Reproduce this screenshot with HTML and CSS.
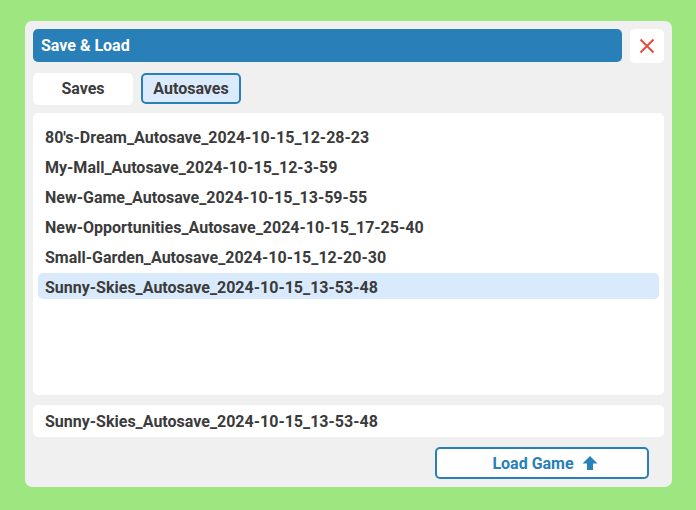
FILE: index.html
```html
<!DOCTYPE html>
<html>
<head>
    <title>Save &amp; Load</title>
    <link rel="stylesheet" href="styles.css">
</head>
<body>
    <div class="panel">
        <div class="header">
            <div class="title">Save &amp; Load</div>
            <button class="close">
                <svg width="16" height="16" viewBox="0 0 16 16">
                    <path d="M1.5 1.5 L14.5 14.5 M14.5 1.5 L1.5 14.5" stroke="#e74c3c" stroke-width="2" fill="none"/>
                </svg>
            </button>
        </div>
        <div class="tabs">
            <div class="tab">Saves</div>
            <div class="tab active">Autosaves</div>
        </div>
        <ul class="list">
            <li>80's-Dream_Autosave_2024-10-15_12-28-23</li>
            <li>My-Mall_Autosave_2024-10-15_12-3-59</li>
            <li>New-Game_Autosave_2024-10-15_13-59-55</li>
            <li>New-Opportunities_Autosave_2024-10-15_17-25-40</li>
            <li>Small-Garden_Autosave_2024-10-15_12-20-30</li>
            <li class="selected">Sunny-Skies_Autosave_2024-10-15_13-53-48</li>
        </ul>
        <div class="name">Sunny-Skies_Autosave_2024-10-15_13-53-48</div>
        <div class="actions">
            <button class="load">
                Load Game
                <svg width="16" height="16" viewBox="0 0 16 16">
                    <path d="M8 1 L15.5 8.5 L11 8.5 L11 15 L5 15 L5 8.5 L0.5 8.5 Z" fill="#2980b9"/>
                </svg>
            </button>
        </div>
    </div>
</body>
</html>
```

FILE: styles.css
```css
body {
    margin: 0;
    background-color: #9ee680;
    font-family: Roboto, "Liberation Sans", sans-serif;
    font-weight: bold;
    color: #3b3b3b;
}
.panel {
    margin: 21px 0 0 25px;
    width: 631px;
    height: 450px;
    padding: 8px;
    background: #f0f0f0;
    border-radius: 7px;
    display: flex;
    flex-direction: column;
}
.header {
    display: flex;
    gap: 8px;
    height: 34px;
}
.title {
    flex: 1;
    height: 33px;
    background: #2980b9;
    color: white;
    border-radius: 5px;
    font-size: 16px;
    line-height: 33px;
    padding-left: 8px;
}
.close {
    width: 34px;
    height: 34px;
    border: none;
    background: white;
    border-radius: 5px;
    padding: 0;
    display: flex;
    align-items: center;
    justify-content: center;
}
.tabs {
    display: flex;
    gap: 8px;
    margin-top: 10px;
}
.tab {
    width: 100px;
    height: 32px;
    box-sizing: border-box;
    background: white;
    border-radius: 5px;
    font-size: 16px;
    line-height: 31px;
    text-align: center;
}
.tab.active {
    background: #dbeafc;
    border: 2px solid #2980b9;
    line-height: 27px;
    height: 31px;
}
.list {
    list-style: none;
    margin: 8px 0 0;
    padding: 10px 5px 8px;
    height: 264px;
    background: white;
    border-radius: 5px;
}
.list li {
    height: 26px;
    line-height: 29px;
    margin-bottom: 4px;
    padding-left: 7px;
    font-size: 16px;
    border-radius: 5px;
}
.list li.selected {
    background: #d9eafc;
}
.name {
    margin-top: 10px;
    height: 32px;
    line-height: 33px;
    padding-left: 12px;
    background: white;
    border-radius: 5px;
    font-size: 16px;
}
.actions {
    display: flex;
    justify-content: flex-end;
    margin-top: 10px;
    padding-right: 15px;
}
.load {
    width: 214px;
    height: 32px;
    background: white;
    border: 2px solid #2980b9;
    border-radius: 5px;
    color: #2980b9;
    font-family: Roboto, "Liberation Sans", sans-serif;
    font-weight: bold;
    font-size: 16px;
    display: flex;
    align-items: center;
    justify-content: center;
    gap: 8px;
    padding: 0 0 0 6px;
}
```
